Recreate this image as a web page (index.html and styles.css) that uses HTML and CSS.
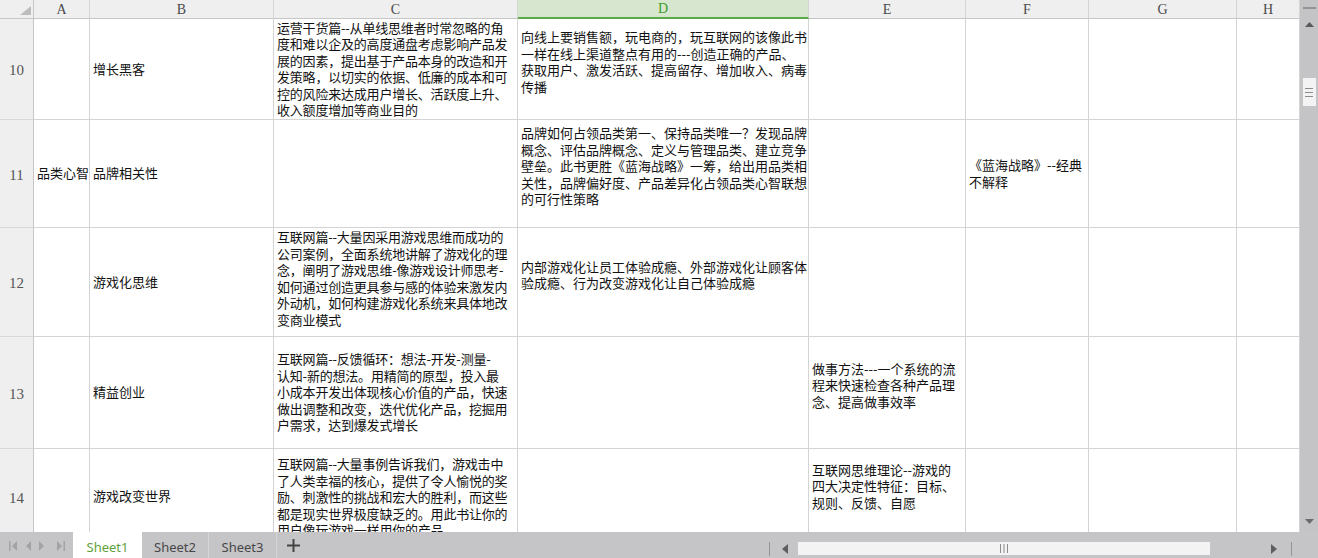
FILE: index.html
```html
<!DOCTYPE html>
<html lang="zh-CN">
<head>
<meta charset="utf-8">
<title>Sheet1</title>
<link rel="stylesheet" href="styles.css">
</head>
<body>
<div class="app">
  <div class="main">
    <div class="sheet">
      <div class="corner"><svg width="11" height="9" viewBox="0 0 11 9"><polygon points="11,0 11,9 0,9" fill="#bdbdbd"/></svg></div>
      <div class="colhd">A</div>
      <div class="colhd">B</div>
      <div class="colhd">C</div>
      <div class="colhd sel">D</div>
      <div class="colhd">E</div>
      <div class="colhd">F</div>
      <div class="colhd">G</div>
      <div class="colhd">H</div>

      <div class="rowhd">10</div>
      <div class="cell"></div>
      <div class="cell">增长黑客</div>
      <div class="cell tight">运营干货篇--从单线思维者时常忽略的角<br>度和难以企及的高度通盘考虑影响产品发<br>展的因素，提出基于产品本身的改造和开<br>发策略，以切实的依据、低廉的成本和可<br>控的风险来达成用户增长、活跃度上升、<br>收入额度增加等商业目的</div>
      <div class="cell up">向线上要销售额，玩电商的，玩互联网的该像此书<br>一样在线上渠道整点有用的---创造正确的产品、<br>获取用户、激发活跃、提高留存、增加收入、病毒<br>传播</div>
      <div class="cell"></div>
      <div class="cell"></div>
      <div class="cell"></div>
      <div class="cell"></div>

      <div class="rowhd">11</div>
      <div class="cell">品类心智</div>
      <div class="cell">品牌相关性</div>
      <div class="cell"></div>
      <div class="cell up">品牌如何占领品类第一、保持品类唯一？发现品牌<br>概念、评估品牌概念、定义与管理品类、建立竞争<br>壁垒。此书更胜《蓝海战略》一筹，给出用品类相<br>关性，品牌偏好度、产品差异化占领品类心智联想<br>的可行性策略</div>
      <div class="cell"></div>
      <div class="cell">《蓝海战略》--经典<br>不解释</div>
      <div class="cell"></div>
      <div class="cell"></div>

      <div class="rowhd">12</div>
      <div class="cell"></div>
      <div class="cell">游戏化思维</div>
      <div class="cell tight up-s">互联网篇--大量因采用游戏思维而成功的<br>公司案例，全面系统地讲解了游戏化的理<br>念，阐明了游戏思维-像游戏设计师思考-<br>如何通过创造更具参与感的体验来激发内<br>外动机，如何构建游戏化系统来具体地改<br>变商业模式</div>
      <div class="cell up">内部游戏化让员工体验成瘾、外部游戏化让顾客体<br>验成瘾、行为改变游戏化让自己体验成瘾</div>
      <div class="cell"></div>
      <div class="cell"></div>
      <div class="cell"></div>
      <div class="cell"></div>

      <div class="rowhd">13</div>
      <div class="cell"></div>
      <div class="cell">精益创业</div>
      <div class="cell tight">互联网篇--反馈循环：想法-开发-测量-<br>认知-新的想法。用精简的原型，投入最<br>小成本开发出体现核心价值的产品，快速<br>做出调整和改变，迭代优化产品，挖掘用<br>户需求，达到爆发式增长</div>
      <div class="cell"></div>
      <div class="cell up">做事方法---一个系统的流<br>程来快速检查各种产品理<br>念、提高做事效率</div>
      <div class="cell"></div>
      <div class="cell"></div>
      <div class="cell"></div>

      <div class="rowhd">14</div>
      <div class="cell"></div>
      <div class="cell">游戏改变世界</div>
      <div class="cell tight top">互联网篇--大量事例告诉我们，游戏击中<br>了人类幸福的核心，提供了令人愉悦的奖<br>励、刺激性的挑战和宏大的胜利，而这些<br>都是现实世界极度缺乏的。用此书让你的<br>用户像玩游戏一样用你的产品</div>
      <div class="cell"></div>
      <div class="cell up2">互联网思维理论--游戏的<br>四大决定性特征：目标、<br>规则、反馈、自愿</div>
      <div class="cell"></div>
      <div class="cell"></div>
      <div class="cell"></div>
    </div>
    <div class="vscroll">
      <div class="vsplit"></div>
      <svg class="vup" width="9" height="5" viewBox="0 0 9 5"><polygon points="4.5,0 9,5 0,5" fill="#5a5a5a"/></svg>
      <div class="vthumb"><svg width="8" height="9" viewBox="0 0 8 9"><rect x="0" y="0" width="8" height="1" fill="#8c8c8c"/><rect x="0" y="4" width="8" height="1" fill="#8c8c8c"/><rect x="0" y="8" width="8" height="1" fill="#8c8c8c"/></svg></div>
      <svg class="vdown" width="9" height="5" viewBox="0 0 9 5"><polygon points="0,0 9,0 4.5,5" fill="#6a6a6a"/></svg>
    </div>
  </div>
  <div class="tabbar">
    <div class="nav">
      <svg width="73" height="26" viewBox="0 0 73 26">
        <g fill="#a3a3a3">
          <rect x="9" y="9" width="1.5" height="10"/>
          <polygon points="17,9 12,14 17,19"/>
          <polygon points="31,9 26,14 31,19"/>
          <polygon points="39,9 44,14 39,19"/>
          <polygon points="57,9 62,14 57,19"/>
          <rect x="63.5" y="9" width="1.5" height="10"/>
        </g>
      </svg>
    </div>
    <div class="tab active">Sheet1</div>
    <div class="tab t2">Sheet2</div>
    <div class="tab t3">Sheet3</div>
    <div class="plus"><svg width="13" height="13" viewBox="0 0 13 13"><rect x="5.5" y="0" width="2" height="13" fill="#444"/><rect x="0" y="5.5" width="13" height="2" fill="#444"/></svg></div>
    <div class="hscroll">
      <div class="hsep"></div>
      <svg class="hleft" width="6" height="10" viewBox="0 0 6 10"><polygon points="6,0 0,5 6,10" fill="#5e5e5e"/></svg>
      <div class="htrack">
        <div class="hthumb"><svg width="8" height="9" viewBox="0 0 8 9"><rect x="0" y="0" width="1" height="9" fill="#8c8c8c"/><rect x="3.5" y="0" width="1" height="9" fill="#8c8c8c"/><rect x="7" y="0" width="1" height="9" fill="#8c8c8c"/></svg></div>
      </div>
      <svg class="hright" width="6" height="10" viewBox="0 0 6 10"><polygon points="0,0 6,5 0,10" fill="#5e5e5e"/></svg>
      <div class="hsep r"></div>
    </div>
  </div>
</div>
</body>
</html>
```
FILE: styles.css
```css
* { box-sizing: border-box; }
html, body { margin: 0; padding: 0; }
body {
  width: 1318px;
  height: 558px;
  overflow: hidden;
  background: #ffffff;
  font-family: "Noto Sans CJK SC", "Noto Sans", sans-serif;
}
.app {
  display: flex;
  flex-direction: column;
  width: 1318px;
  height: 558px;
}
.main {
  display: flex;
  height: 532px;
}
.sheet {
  display: grid;
  grid-template-columns: 34px 56px 184px 244px 291px 157px 123px 148px 63px;
  grid-template-rows: 19px 101px 108px 109px 112px 96px;
  width: 1300px;
  height: 532px;
  overflow: hidden;
}
.corner {
  background: #efefef;
  border-right: 1px solid #c6c6c6;
  border-bottom: 1px solid #c6c6c6;
  display: flex;
  align-items: flex-end;
  justify-content: flex-end;
  padding: 0 2px 3px 0;
}
.colhd {
  background: #efefef;
  border-right: 1px solid #d4d4d4;
  border-bottom: 1px solid #c6c6c6;
  display: flex;
  align-items: center;
  justify-content: center;
  padding-top: 1px;
  font-family: "Liberation Serif", serif;
  font-size: 14px;
  color: #4a4a4a;
}
.colhd.sel {
  background: #d6e6cf;
  border-bottom: 2px solid #5aa84a;
  color: #3f9c2d;
}
.rowhd {
  background: #efefef;
  border-right: 1px solid #c6c6c6;
  border-bottom: 1px solid #d8d8d8;
  display: flex;
  align-items: center;
  justify-content: center;
  padding-top: 3px;
  font-family: "Liberation Serif", serif;
  font-size: 15px;
  color: #555555;
}
.cell {
  border-right: 1px solid #d4d4d4;
  border-bottom: 1px solid #d4d4d4;
  display: flex;
  flex-direction: column;
  justify-content: center;
  padding: 0 1px 0 3px;
  font-size: 13px;
  line-height: 16.5px;
  color: #111111;
  white-space: nowrap;
  overflow: hidden;
}
.cell.tight { letter-spacing: -0.2px; }
.cell.up { padding-bottom: 14px; }
.cell.up-s { padding-bottom: 7px; }
.cell.up2 { padding-bottom: 20px; }
.cell.top { justify-content: flex-start; padding-top: 7px; }

.vscroll {
  width: 18px;
  height: 532px;
  background: #c4c4c6;
  display: flex;
  flex-direction: column;
  align-items: center;
}
.vsplit {
  width: 13px;
  height: 2px;
  background: #939393;
  margin-top: 7px;
}
.vup { margin-top: 13px; display: block; }
.vthumb {
  width: 13px;
  height: 28px;
  margin-top: 51px;
  background: #f3f3f3;
  display: flex;
  align-items: center;
  justify-content: center;
}
.vthumb svg { display: block; }
.vdown { margin-top: auto; margin-bottom: 8px; display: block; }

.tabbar {
  display: flex;
  height: 26px;
  background: #c5c5c7;
}
.nav { width: 73px; }
.nav svg { display: block; }
.tab {
  display: flex;
  align-items: center;
  justify-content: center;
  padding-top: 3px;
  font-family: "Noto Sans", "Open Sans", sans-serif;
  font-size: 13px;
  color: #474747;
  border-right: 1px solid #d6d6d8;
}
.tab.active {
  width: 69px;
  background: #ffffff;
  color: #62a23c;
  border-right: none;
}
.tab.t2 { width: 67px; }
.tab.t3 { width: 68px; }
.plus {
  display: flex;
  align-items: center;
  margin-left: 10px;
  padding-top: 1px;
}
.plus svg { display: block; }
.hscroll {
  margin-left: auto;
  width: 549px;
  display: flex;
  align-items: center;
  padding-top: 7px;
  padding-right: 26px;
}
.hsep {
  width: 1px;
  height: 14px;
  background: #959595;
}
.hleft { margin-left: 12px; display: block; }
.htrack {
  flex: 1;
  margin-left: 10px;
  display: flex;
}
.hthumb {
  width: 412px;
  height: 13px;
  background: #f3f3f3;
  display: flex;
  align-items: center;
  justify-content: center;
}
.hthumb svg { display: block; }
.hright { display: block; }
.hsep.r { margin-left: 14px; }
```
